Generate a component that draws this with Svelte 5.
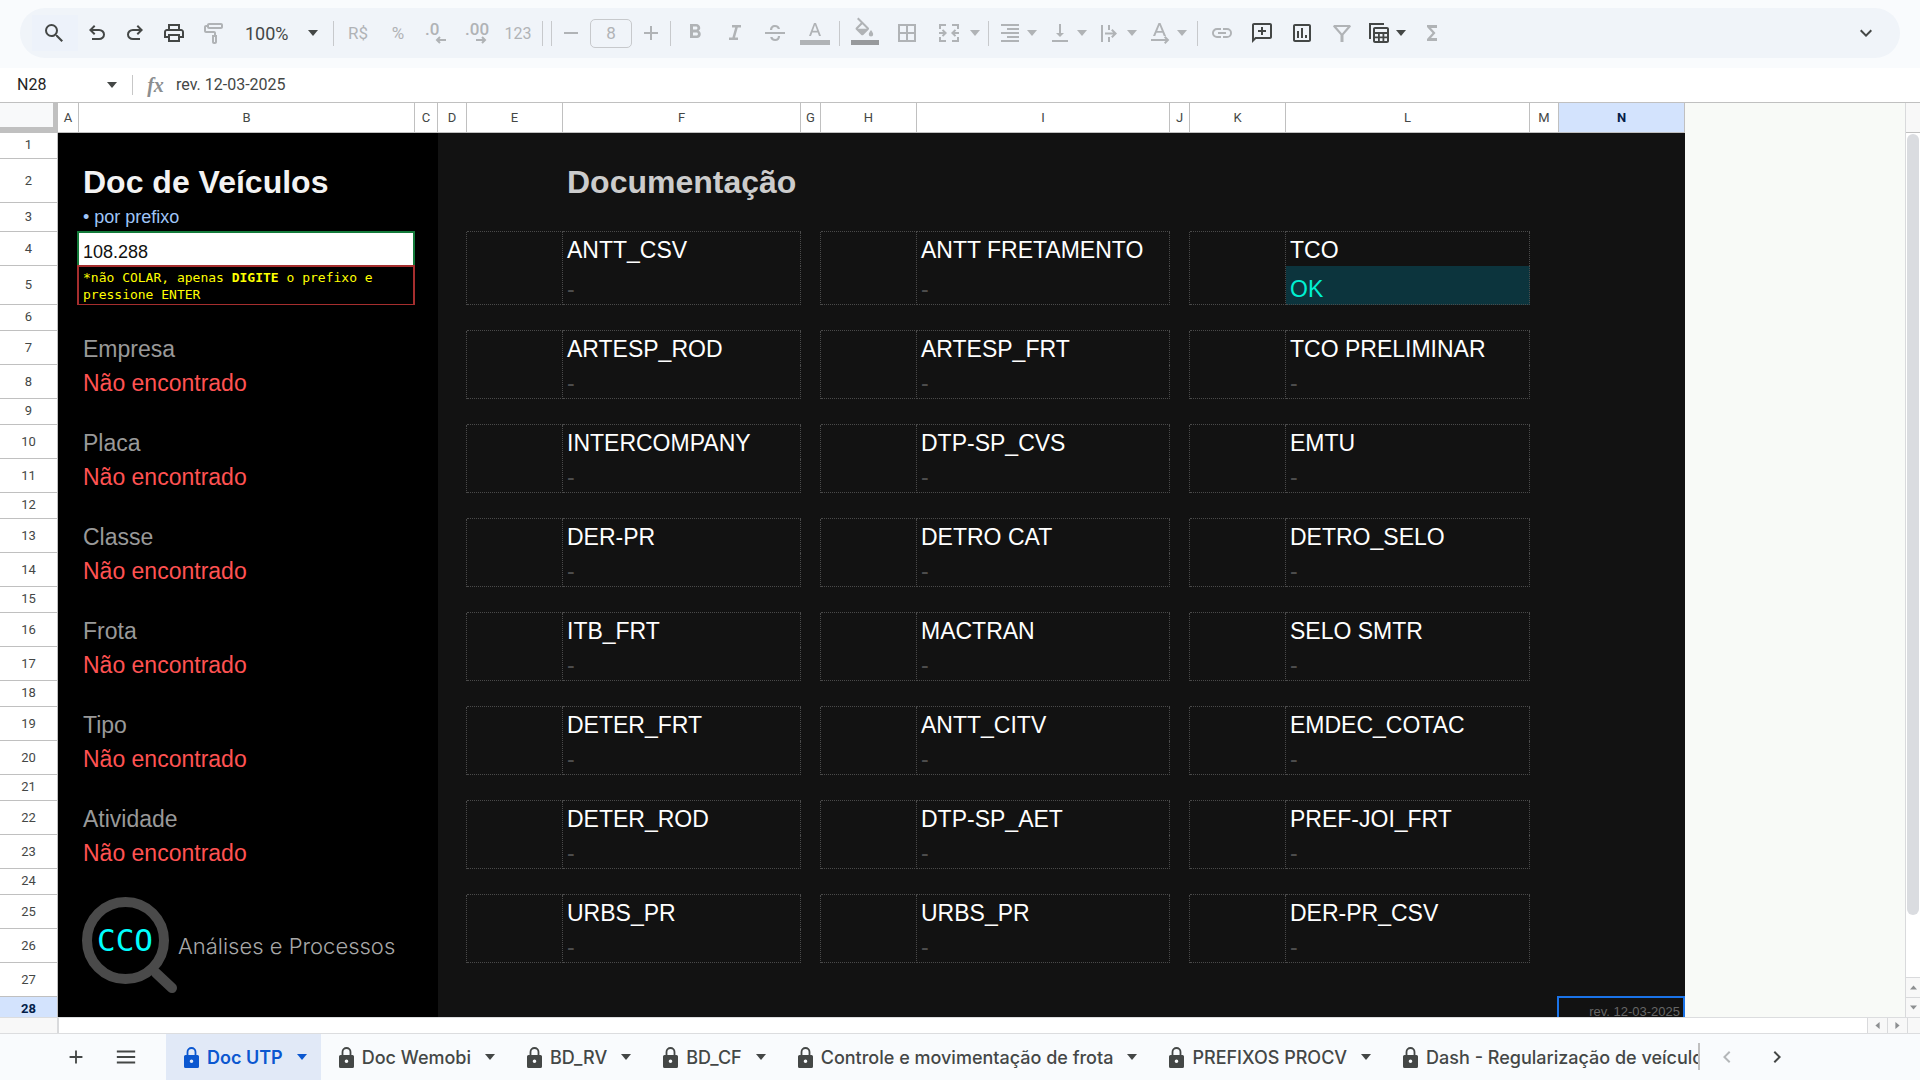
<script>
  const icons = {
    search: 'M15.5 14h-.79l-.28-.27A6.47 6.47 0 0 0 16 9.5 6.5 6.5 0 1 0 9.5 16c1.61 0 3.09-.59 4.23-1.57l.27.28v.79l5.5 5.49L20.99 19.5 15.5 14zm-6 0a4.5 4.5 0 1 1 0-9 4.5 4.5 0 0 1 0 9z',
    undo: 'M7 19v-2h7.1q1.575 0 2.738-1T18 13.5 16.837 11 14.1 10H7.8l2.6 2.6L9 14 4 9l5-5 1.4 1.4L7.8 8h6.3q2.425 0 4.163 1.575T20 13.5t-1.737 3.925T14.1 19H7z',
    redo: 'M9.9 19q-2.425 0-4.163-1.575T4 13.5t1.737-3.925T9.9 8h6.3l-2.6-2.6L15 4l5 5-5 5-1.4-1.4 2.6-2.6H9.9q-1.575 0-2.738 1T6 13.5 7.162 16 9.9 17H17v2H9.9z',
    print: 'M19 8h-1V3H6v5H5c-1.66 0-3 1.34-3 3v6h4v4h12v-4h4v-6c0-1.66-1.34-3-3-3zM8 5h8v3H8V5zm8 12v2H8v-4h8v2zm2-2v-2H6v2H4v-4c0-.55.45-1 1-1h14c.55 0 1 .45 1 1v4h-2z',
    paint: 'M7 2h12c1.1 0 2 .9 2 2v2c0 1.100-.9 2-2 2H7c-1.100 0-2-.9-2-2H4v4h8c1.100 0 2 .9 2 2v2h1v7c0 1.100-.9 2-2 2h-1c-1.100 0-2-.9-2-2v-7h2v-2H4c-1.100 0-2-.9-2-2V6c0-1.100.9-2 2-2h1c0-1.100.9-2 2-2zm0 2v2h12V4H7zm5 12v5h1v-5h-1z',
    bold: 'M15.600 9.790c.97-.67 1.650-1.770 1.650-2.790 0-2.260-1.750-4-4-4H7v14h7.040c2.090 0 3.710-1.700 3.710-3.790 0-1.520-.86-2.820-2.150-3.420zM10 5.500h3c.83 0 1.500.67 1.500 1.500s-.67 1.500-1.500 1.500h-3v-3zm3.500 9H10v-3h3.500c.83 0 1.500.67 1.500 1.500s-.67 1.500-1.500 1.500z',
    italic: 'M9 4v2.500h3.200L9.400 16.500H6V19h9v-2.500h-3L14.800 6.500H18V4z',
    strike: 'M2 11h20v2H2zM7 9c0-3 2-5 5-5 2.700 0 4.500 1.300 5 4h-2.200c-.4-1.300-1.300-2-2.800-2-1.800 0-2.800 1.200-2.800 3H7zm.2 7h2.300c.4 1.300 1.300 2 2.700 2 1.700 0 2.700-1 2.700-3h2.200c0 3-1.900 5-4.900 5-2.800 0-4.600-1.500-5-4z',
    borders: 'M3 3v18h18V3H3zm8 16H5v-6h6v6zm0-8H5V5h6v6zm8 8h-6v-6h6v6zm0-8h-6V5h6v6z',
    merge: 'M2 3h7v2H4v3H2V3zm13 0h7v5h-2V5h-5V3zM2 16h2v3h5v2H2v-5zm18 0h2v5h-7v-2h5v-3zM2 11h4.200L4.800 9.600 6.200 8.200 10 12l-3.800 3.800-1.400-1.400L6.200 13H2v-2zm20 0v2h-4.200l1.400 1.400-1.400 1.400L14 12l3.800-3.800 1.400 1.400-1.400 1.400H22z',
    align: 'M3 3h18v2H3zM9 7h12v2H9zM3 11h18v2H3zM9 15h12v2H9zM3 19h18v2H3z',
    valign: 'M16 12h-3V3h-2v9H8l4 4 4-4zM4 19v2h16v-2H4z',
    wrap: 'M3 4h2v17H3zM10 4h2v5h-2zM10 16h2v5h-2zM7 11.500h8.200l-2.100-2.100 1.400-1.400 4.500 4.500-4.500 4.500-1.400-1.400 2.100-2.100H7z',
    rotate: 'M3 18h14.500l-1.500-1.500 1.400-1.400L21.300 19l-3.900 3.900L16 21.500l1.500-1.500H3v-2zM5 15l5.500-13h2L18 15h-2.200l-1.300-3.200H8.500L7.200 15H5zm4.200-5h4.600L11.500 4.300 9.200 10z',
    link: 'M3.900 12c0-1.710 1.390-3.100 3.100-3.100h4V7H7a5 5 0 0 0 0 10h4v-1.900H7c-1.710 0-3.100-1.390-3.100-3.100zM8 13h8v-2H8v2zm9-6h-4v1.900h4a3.100 3.100 0 0 1 0 6.200h-4V17h4a5 5 0 0 0 0-10z',
    comment: 'M2 22V4c0-1.100.9-2 2-2h16c1.100 0 2 .9 2 2v12c0 1.100-.9 2-2 2H6l-4 4zm2-4.800L5.200 16H20V4H4v13.200zM11 14h2v-3h3V9h-3V6h-2v3H8v2h3z',
    chart: 'M19 3H5c-1.100 0-2 .9-2 2v14c0 1.100.9 2 2 2h14c1.100 0 2-.9 2-2V5c0-1.100-.9-2-2-2zm0 16H5V5h14v14zM7 10h2v7H7zM11 7h2v10h-2zM15 14h2v3h-2z',
    filter: 'M4 4h16l1 1.500-7.500 8.500V21h-3v-7L3 5.500 4 4zm2.400 2 5.600 6.500L17.600 6H6.400z',
    table: 'M2 2h15v2H4v14H2V2zm6 4h12c1.100 0 2 .9 2 2v12c0 1.100-.9 2-2 2H8c-1.100 0-2-.9-2-2V8c0-1.100.9-2 2-2zm0 2v3h12V8H8zm0 5v2.500h3V13H8zm4.800 0v2.500h2.700V13h-2.700zm4.500 0v2.500H20V13h-2.700zM8 17.300V20h3v-2.700H8zm4.800 0V20h2.700v-2.700h-2.700zm4.500 0V20H20v-2.700h-2.700z',
    sigma: 'M17 4H7v2l5.500 6L7 18v2h10v-3h-6l4.500-5L11 7h6z',
    minus: 'M5 11h14v2H5z',
    plus: 'M19 13h-6v6h-2v-6H5v-2h6V5h2v6h6z',
    menu: 'M2 5h20v2H2zM2 11h20v2H2zM2 17h20v2H2z',
    down: 'M7.400 8.600 12 13.200l4.600-4.600L18 10l-6 6-6-6z',
    prev: 'M15.400 7.400 14 6l-6 6 6 6 1.400-1.400-4.600-4.600z',
    next: 'M10 6 8.600 7.400l4.600 4.600-4.600 4.600L10 18l6-6z'
  };

  const columns = ['A', 'B', 'C', 'D', 'E', 'F', 'G', 'H', 'I', 'J', 'K', 'L', 'M', 'N'];

  const groups = [
    { row: 7, label: 'Empresa', docs: ['ARTESP_ROD', 'ARTESP_FRT', 'TCO PRELIMINAR'] },
    { row: 10, label: 'Placa', docs: ['INTERCOMPANY', 'DTP-SP_CVS', 'EMTU'] },
    { row: 13, label: 'Classe', docs: ['DER-PR', 'DETRO CAT', 'DETRO_SELO'] },
    { row: 16, label: 'Frota', docs: ['ITB_FRT', 'MACTRAN', 'SELO SMTR'] },
    { row: 19, label: 'Tipo', docs: ['DETER_FRT', 'ANTT_CITV', 'EMDEC_COTAC'] },
    { row: 22, label: 'Atividade', docs: ['DETER_ROD', 'DTP-SP_AET', 'PREF-JOI_FRT'] },
    { row: 25, label: null, docs: ['URBS_PR', 'URBS_PR', 'DER-PR_CSV'] }
  ];

  const tabs = ['Doc UTP', 'Doc Wemobi', 'BD_RV', 'BD_CF', 'Controle e movimentação de frota', 'PREFIXOS PROCV', 'Dash - Regularização de veículos'];
</script>

{#snippet icon(name)}
  <svg class="icon" viewBox="0 0 24 24" aria-hidden="true"><path d={icons[name]} fill-rule="evenodd" /></svg>
{/snippet}

{#snippet caret()}
  <svg class="caret" viewBox="0 0 10 6" aria-hidden="true"><path d="M0 0h10L5 6z" /></svg>
{/snippet}

{#snippet tool(name, label, off = true)}
  <button class="tool" class:off aria-label={label}>{@render icon(name)}</button>
{/snippet}

{#snippet split(name, label, off = true)}
  <button class="tool split" class:off aria-label={label}>{@render icon(name)}{@render caret()}</button>
{/snippet}

{#snippet sep()}<span class="sep"></span>{/snippet}

{#snippet docTop(docs)}
  <td rowspan="2" class="edge"></td>
  {#each docs as doc, i}
    <td rowspan="2" class="box"></td>
    <td class="edge doc">{doc}</td>
    {#if i < 2}<td rowspan="2" class="edge"></td>{/if}
  {/each}
  <td rowspan="2"></td>
  <td rowspan="2"></td>
{/snippet}

{#snippet spacer(n)}
  <tr class="gap">
    <th scope="row">{n}</th>
    <td class="side"></td><td class="side"></td><td class="side"></td>
    <td></td><td class="floor"></td><td class="floor"></td>
    <td></td><td class="floor"></td><td class="floor"></td>
    <td></td><td class="floor"></td><td class="floor"></td>
    <td></td><td></td>
  </tr>
{/snippet}

<div class="app">
  <header class="top">
    <div class="toolbar" role="toolbar" aria-label="Barra de ferramentas">
      <button class="tool find" aria-label="Pesquisar nos menus">{@render icon('search')}</button>
      <button class="tool narrow" aria-label="Desfazer">{@render icon('undo')}</button>
      <button class="tool narrow" aria-label="Refazer">{@render icon('redo')}</button>
      {@render tool('print', 'Imprimir', false)}
      {@render tool('paint', 'Pintar formatação')}
      <div class="zoom">
        <select aria-label="Zoom"><option>100%</option></select>
        {@render caret()}
      </div>
      {@render sep()}
      <button class="tool off">R$</button>
      <button class="tool off">%</button>
      <button class="tool off decimal" aria-label="Diminuir casas decimais">
        <span>.0</span>
        <svg viewBox="0 0 12 8" aria-hidden="true"><path d="M11 4H2M5 1 2 4l3 3" /></svg>
      </button>
      <button class="tool off decimal" aria-label="Aumentar casas decimais">
        <span>.00</span>
        <svg viewBox="0 0 12 8" aria-hidden="true"><path d="M1 4h9M7 1l3 3-3 3" /></svg>
      </button>
      <button class="tool off num">123</button>
      {@render sep()}{@render sep()}
      <div class="size">
        <button class="step" aria-label="Diminuir fonte">{@render icon('minus')}</button>
        <input aria-label="Tamanho da fonte" value="8" />
        <button class="step" aria-label="Aumentar fonte">{@render icon('plus')}</button>
      </div>
      {@render sep()}
      {@render tool('bold', 'Negrito')}
      {@render tool('italic', 'Itálico')}
      {@render tool('strike', 'Tachado')}
      <button class="tool off" aria-label="Cor do texto">
        <svg class="swatch" viewBox="0 0 30 30" aria-hidden="true">
          <path d="M9 18 14 5h2l5 13h-2l-1.300-3.500h-5.400L11 18zm3.900-5.300h4.200L15 7z" fill-rule="evenodd" />
          <path d="M0 22h30v5H0z" />
        </svg>
      </button>
      {@render sep()}
      <button class="tool wide off" aria-label="Cor de preenchimento">
        <svg class="swatch" viewBox="0 0 30 30" aria-hidden="true">
          <path d="M7 1l1.500-1.500 10 10c.7.7.7 1.500 0 2.200l-5 5c-.7.7-1.700.7-2.400 0l-5-5c-.7-.7-.7-1.500 0-2.200L10.800 4.800zM12.300 6.200 7.800 10.700h9z" fill-rule="evenodd" />
          <path d="M21 12s2.200 2.700 2.200 4.200a2.200 2.200 0 0 1-4.400 0C18.800 14.700 21 12 21 12z" />
          <path class="ink" d="M1 22h28v5H1z" />
        </svg>
      </button>
      <button class="tool wide off" aria-label="Bordas">{@render icon('borders')}</button>
      <button class="tool split roomy off" aria-label="Mesclar células">{@render icon('merge')}{@render caret()}</button>
      {@render sep()}
      {@render split('align', 'Alinhamento horizontal')}
      {@render split('valign', 'Alinhamento vertical')}
      {@render split('wrap', 'Ajuste de texto')}
      {@render split('rotate', 'Rotação do texto')}
      {@render sep()}
      {@render tool('link', 'Inserir link')}
      {@render tool('comment', 'Inserir comentário', false)}
      {@render tool('chart', 'Inserir gráfico', false)}
      {@render tool('filter', 'Criar filtro')}
      {@render split('table', 'Visualizações de tabela', false)}
      {@render tool('sigma', 'Funções')}
      <button class="tool last" aria-label="Ocultar menus">{@render icon('down')}</button>
    </div>
  </header>

  <div class="formula">
    <input class="name" aria-label="Caixa de nome" value="N28" />
    <button class="pick" aria-label="Intervalos nomeados">{@render caret()}</button>
    <span class="bar"></span>
    <span class="fx" aria-hidden="true">fx</span>
    <input class="value" aria-label="Barra de fórmulas" value="rev. 12-03-2025" />
  </div>

  <main class="sheet">
    <div class="view">
      <table>
        <colgroup>
          <col class="c-head" />
          {#each columns as c}<col class="c-{c}" />{/each}
        </colgroup>
        <thead>
          <tr>
            <td class="corner"></td>
            {#each columns as c}<th scope="col" class:current={c === 'N'}>{c}</th>{/each}
          </tr>
        </thead>
        <tbody>
          <tr class="gap">
            <th scope="row">1</th>
            <td class="side" colspan="3"></td><td colspan="11"></td>
          </tr>
          <tr class="tall">
            <th scope="row">2</th>
            <td class="side"></td><td class="side title">Doc de Veículos</td><td class="side"></td>
            <td></td><td></td><td class="title muted" colspan="9">Documentação</td>
          </tr>
          <tr class="sub">
            <th scope="row">3</th>
            <td class="side"></td><td class="side hint">• por prefixo</td><td class="side"></td>
            <td></td><td class="floor"></td><td class="floor"></td>
            <td></td><td class="floor"></td><td class="floor"></td>
            <td></td><td class="floor"></td><td class="floor"></td>
            <td></td><td></td>
          </tr>
          <tr class="line">
            <th scope="row">4</th>
            <td class="side"></td><td class="ring prefix">108.288</td><td class="side"></td>
            {@render docTop(['ANTT_CSV', 'ANTT FRETAMENTO', 'TCO'])}
          </tr>
          <tr class="note-row">
            <th scope="row">5</th>
            <td class="side"></td>
            <td class="side ring note">*não COLAR, apenas <b>DIGITE</b> o prefixo e pressione ENTER</td>
            <td class="side"></td>
            <td class="box dash">-</td><td class="box dash">-</td><td class="box ok">OK</td>
          </tr>
          {#each groups as g}
            {@render spacer(g.row - 1)}
            <tr class="line">
              <th scope="row">{g.row}</th>
              <td class="side"></td>
              {#if g.label}
                <td class="side label">{g.label}</td>
              {:else}
                <td class="side brand" rowspan="3">
                  <div class="logo">
                    <svg viewBox="0 0 96 97" role="img" aria-label="CCO">
                      <path d="M74 76 90 91" stroke-linecap="round" />
                      <circle cx="43.500" cy="43.500" r="38.500" />
                      <text x="43" y="54" text-anchor="middle">CCO</text>
                    </svg>
                    <span>Análises e Processos</span>
                  </div>
                </td>
              {/if}
              <td class="side"></td>
              {@render docTop(g.docs)}
            </tr>
            <tr class="line">
              <th scope="row">{g.row + 1}</th>
              <td class="side"></td>
              {#if g.label}<td class="side missing">Não encontrado</td>{/if}
              <td class="side"></td>
              <td class="box dash">-</td><td class="box dash">-</td><td class="box dash">-</td>
            </tr>
          {/each}
          <tr class="line">
            <th scope="row">27</th>
            <td class="side"></td><td class="side"></td><td colspan="11"></td>
          </tr>
          <tr class="gap">
            <th scope="row" class="current">28</th>
            <td class="side" colspan="3"></td><td colspan="10"></td>
            <td class="ring rev">rev. 12-03-2025</td>
          </tr>
        </tbody>
      </table>
    </div>
    <div class="vscroll">
      <div class="cap"></div>
      <div class="track"><div class="thumb"></div></div>
      <button class="nudge up" aria-label="Rolar para cima">{@render caret()}</button>
      <button class="nudge" aria-label="Rolar para baixo">{@render caret()}</button>
    </div>
  </main>

  <div class="hscroll">
    <div class="stub"></div>
    <button class="nudge left" aria-label="Rolar para a esquerda">{@render caret()}</button>
    <button class="nudge right" aria-label="Rolar para a direita">{@render caret()}</button>
    <div class="end"></div>
  </div>

  <footer>
    <button class="foot" aria-label="Adicionar página">{@render icon('plus')}</button>
    <button class="foot" aria-label="Todas as páginas">{@render icon('menu')}</button>
    <nav aria-label="Páginas">
      {#each tabs as t, i}
        <button class="tab" class:active={i === 0}>
          <svg class="lock" viewBox="0 0 15 21" aria-hidden="true">
            <path d="M3.500 9V5a4 4 0 0 1 8 0v4" fill="none" stroke="currentColor" stroke-width="1.800" />
            <path d="M1.500 8h12A1.500 1.500 0 0 1 15 9.500v10a1.500 1.500 0 0 1-1.500 1.500h-12A1.500 1.500 0 0 1 0 19.500v-10A1.500 1.500 0 0 1 1.500 8zM7.500 12.500a1.800 1.800 0 1 0 0 3.600 1.800 1.800 0 0 0 0-3.600z" fill-rule="evenodd" />
          </svg>
          <span>{t}</span>
          {@render caret()}
        </button>
      {/each}
    </nav>
    <button class="page faint" aria-label="Páginas anteriores">{@render icon('prev')}</button>
    <button class="page" aria-label="Próximas páginas">{@render icon('next')}</button>
  </footer>
</div>

<style>
  :global(body) { margin: 0; overflow: hidden; }
  .app {
    display: flex;
    flex-direction: column;
    height: 100vh;
    background: #fff;
    color: #444746;
    font-family: Roboto, "Liberation Sans", sans-serif;
  }
  button, input, select {
    font: inherit;
    color: inherit;
    background: none;
    border: 0;
    padding: 0;
    margin: 0;
    box-sizing: border-box;
    outline: none;
  }
  svg { display: block; flex: none; fill: currentColor; }
  .icon { width: 24px; height: 24px; }
  .caret { width: 10px; height: 6px; }

  .top { padding: 8px 20px 10px; background: #f9fbfd; }
  .toolbar {
    display: flex;
    align-items: center;
    height: 50px;
    padding: 0 12px;
    border-radius: 25px;
    background: #f0f4f9;
    box-sizing: border-box;
  }
  .tool {
    display: flex;
    align-items: center;
    justify-content: center;
    flex: none;
    width: 40px;
    height: 36px;
    font-size: 17px;
  }
  .narrow { width: 38px; }
  .wide { width: 42px; }
  .find { width: 46px; padding-right: 2px; background: #edf2fa; }
  .off { color: #b0b3b6; }
  .num { font-size: 16px; }
  .split { width: 50px; justify-content: flex-start; padding-left: 5px; gap: 5px; }
  .roomy { width: 56px; padding-left: 9px; gap: 9px; }
  .last { margin-left: auto; width: 44px; }
  .sep { flex: none; width: 1px; height: 25px; margin: 0 4px; background: #c7c9cc; }
  .zoom { display: flex; align-items: center; width: 95px; padding-left: 11px; box-sizing: border-box; font-size: 18px; }
  .zoom select { appearance: none; width: 63px; }
  .decimal { flex-direction: column; align-items: flex-start; padding-left: 7px; font-weight: 500; line-height: 14px; }
  .decimal svg { width: 12px; height: 8px; margin-left: 10px; fill: none; stroke: currentColor; stroke-width: 2; }
  .size { display: flex; align-items: center; gap: 6px; padding: 0 2px; color: #b0b3b6; }
  .size input { width: 42px; height: 29px; border: 1px solid #c7c9cc; border-radius: 5px; text-align: center; font-size: 17px; }
  .step { width: 26px; height: 30px; display: flex; align-items: center; justify-content: center; }
  .swatch { width: 30px; height: 30px; overflow: visible; }
  .ink { fill: #97999c; }

  .formula {
    display: flex;
    align-items: center;
    height: 34px;
    border-bottom: 1px solid #c0c0c0;
    font-size: 16px;
  }
  .name { width: 107px; padding: 0 0 2px 17px; color: #1f1f1f; }
  .pick { width: 10px; }
  .bar { width: 1px; height: 20px; margin-left: 15px; background: #c7c7c7; }
  .fx { width: 43px; padding-left: 2px; box-sizing: border-box; text-align: center; color: #8b8e90; font: italic 700 20px "Liberation Serif", serif; }
  .value { flex: 1; padding-bottom: 2px; }

  .sheet { flex: 1; min-height: 0; display: flex; background: #f8faf7; }
  .view { flex: 1; min-width: 0; overflow: hidden; }
  table { table-layout: fixed; width: 0; border-spacing: 0; border-collapse: separate; }
  .c-head { width: 58px; }
  .c-A { width: 21px; }
  .c-B { width: 336px; }
  .c-C { width: 23px; }
  .c-D, .c-M { width: 29px; }
  .c-E, .c-H, .c-K { width: 96px; }
  .c-F { width: 238px; }
  .c-G, .c-J { width: 20px; }
  .c-I { width: 253px; }
  .c-L { width: 244px; }
  .c-N { width: 126px; }
  th {
    padding: 0;
    box-sizing: border-box;
    border-right: 1px solid #c0c0c0;
    border-bottom: 1px solid #c0c0c0;
    background: #fff;
    font-size: 13px;
    line-height: 16px;
    font-weight: 400;
  }
  thead tr { height: 30px; }
  .corner { background: #f8f9fa; border-right: 5px solid #c0c0c0; border-bottom: 6px solid #c0c0c0; }
  .current { background: #d3e3fd; color: #041e49; font-weight: 700; }
  td {
    box-sizing: border-box;
    padding: 0 4px;
    background: #121212;
    white-space: nowrap;
    vertical-align: bottom;
    font-family: "Liberation Sans", Arial, sans-serif;
    font-size: 23px;
    line-height: 26px;
  }
  .gap { height: 26px; }
  .gap th { padding-bottom: 2px; }
  .line { height: 34px; }
  .tall { height: 44px; }
  .sub { height: 29px; }
  .note-row { height: 39px; }
  .side { background: #000; }
  .floor { border-bottom: 1px dotted #4a4a4a; }
  .edge { border-right: 1px dotted #4a4a4a; }
  .box { border-right: 1px dotted #4a4a4a; border-bottom: 1px dotted #4a4a4a; }
  .ring {
    box-shadow: -2px -1px 0 var(--ring), 0 -1px 0 var(--ring), -2px 0 0 var(--ring),
      inset -2px 0 0 var(--ring), inset 0 1px 0 var(--ring), inset 0 -1px 0 var(--ring);
  }
  .title { padding-bottom: 3px; font-size: 32px; line-height: 36px; font-weight: 700; color: #f3f3f3; }
  .muted { color: #ccc; }
  .hint { padding-bottom: 2px; vertical-align: middle; font-size: 18px; line-height: 20px; color: #9fc5f8; }
  .prefix { --ring: #137a3a; padding-bottom: 4px; background: #fff; color: #111; font-size: 18px; line-height: 20px; }
  .note { --ring: #a52e2e; white-space: normal; font-family: "DejaVu Sans Mono", monospace; font-size: 13px; line-height: 17px; color: #ff0; vertical-align: middle; }
  .label, .missing, .doc { padding-bottom: 3px; }
  .label { color: #999; }
  .missing { color: #ff5252; }
  .doc { color: #fff; }
  .dash { padding-bottom: 2px; color: #4d4d4d; }
  .ok { padding-bottom: 2px; background: #0c343d; color: #00f0d2; }
  .rev { --ring: #1a73e8; padding: 0 5px 3px; font-size: 13px; line-height: 16px; text-align: right; color: #666; }
  .brand { padding-left: 3px; vertical-align: top; }
  .logo { display: flex; align-items: center; height: 101px; color: #a8a8a8; }
  .logo svg { width: 96px; height: 97px; fill: none; stroke: #4a4a4a; stroke-width: 10; }
  .logo text { fill: #0ff; stroke: none; font: 31px "DejaVu Sans Mono", monospace; }
  .logo span { font: 300 22px Inter, sans-serif; }

  .vscroll { display: flex; flex-direction: column; width: 15px; box-sizing: border-box; border-left: 1px solid #d9dadc; background: #fff; }
  .cap { height: 29px; border-bottom: 1px solid #c0c0c0; background: #f8f8f8; }
  .track { flex: 1; padding: 1px 1px 62px; }
  .thumb { height: 100%; border-radius: 6px; background: #dadce0; }
  .nudge { display: flex; align-items: center; justify-content: center; height: 20px; border-top: 1px solid #d9dadc; background: #f8f8f8; color: #8d8f91; }
  .nudge .caret { width: 7px; height: 5px; }
  .up .caret { transform: rotate(180deg); }
  .hscroll { display: flex; height: 15px; border-top: 1px solid #dcdddf; border-bottom: 1px solid #dcdddf; }
  .stub { width: 57px; border-right: 2px solid #d9dadc; background: #f8f8f8; }
  .left, .right { width: 20px; height: 15px; border-top: 0; border-left: 1px solid #d9dadc; }
  .left { margin-left: auto; }
  .left .caret { transform: rotate(90deg); }
  .right .caret { transform: rotate(-90deg); }
  .end { width: 12px; border-left: 1px solid #d9dadc; background: #f8f8f8; }

  footer { display: flex; align-items: center; height: 46px; padding-left: 51px; background: #f9fbfd; }
  .foot { display: flex; align-items: center; justify-content: center; flex: none; width: 50px; height: 46px; }
  .foot .icon { width: 22px; height: 22px; }
  nav { display: flex; width: 1534px; flex: 0 1 auto; min-width: 0; margin: 0 2px 0 15px; overflow: hidden; border-right: 2px solid #c0c0c0; border-image: linear-gradient(transparent 10px, #c0c0c0 10px, #c0c0c0 35px, transparent 35px) 1; box-sizing: border-box; }
  .tab { display: flex; align-items: center; flex: none; height: 46px; padding: 0 14px 0 18px; font-family: Inter, sans-serif; font-size: 18px; font-weight: 500; }
  .tab span { margin: 0 14px 0 8px; }
  .active { background: #e1e9f7; color: #0b57d0; font-weight: 600; }
  .lock { width: 15px; height: 21px; }
  .page { display: flex; align-items: center; justify-content: center; flex: none; width: 50px; height: 46px; }
  .faint { color: #b4b7b9; }
</style>
